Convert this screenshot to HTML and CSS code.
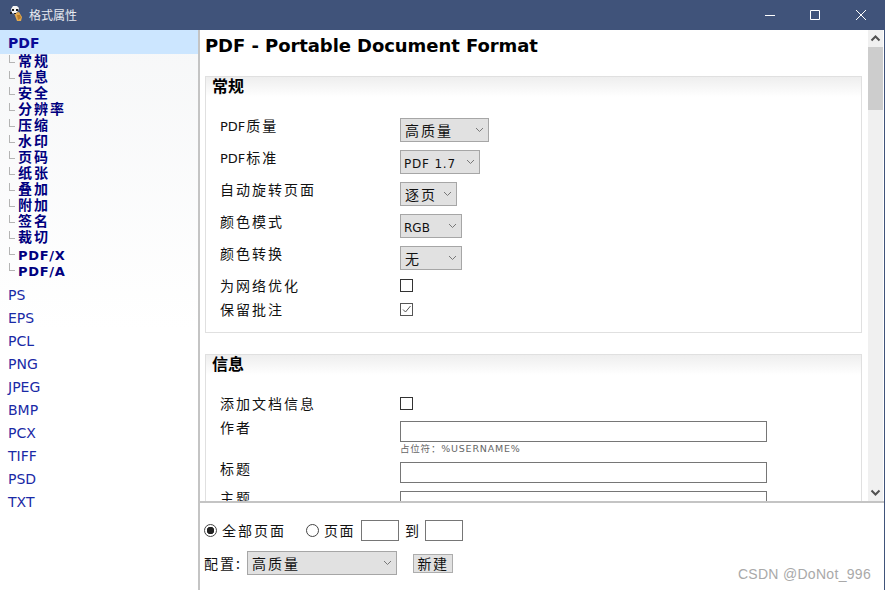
FILE: index.html
```html
<!DOCTYPE html>
<html lang="zh-CN">
<head>
  <meta charset="UTF-8">
  <title>格式属性</title>
  <link rel="stylesheet" href="styles.css">
</head>
<body>
  <div class="window">
    <header class="titlebar">
      <svg class="app-icon" width="14" height="16" viewBox="0 0 14 16">
        <path d="M5 7l5-1 3 5-1 4H8z" fill="#e0a850"/>
        <path d="M8 9l3 0 1 3-3 2z" fill="#b87a28"/>
        <path d="M2 3l2-3h4l2 2-1 3-3 3-3-1z" fill="#f2f2f2"/>
        <path d="M3 3h2v2H3zM7 3h2v2H7zM1 6h2v2H1zM5 7h2v1H5z" fill="#1c1c1c"/>
      </svg>
      <span class="title">格式属性</span>
      <div class="win-buttons">
        <svg width="10" height="10" viewBox="0 0 10 10"><path d="M0 5.500h10" stroke="#fff" fill="none"/></svg>
        <svg width="10" height="10" viewBox="0 0 10 10"><path d="M.5.5h9v9h-9z" stroke="#fff" fill="none"/></svg>
        <svg width="10" height="10" viewBox="0 0 10 10"><path d="M0 0l10 10M10 0L0 10" stroke="#fff" fill="none"/></svg>
      </div>
    </header>

    <div class="body">
      <aside class="sidebar">
        <a class="format active">PDF</a>
        <ul class="subnav">
          <li>常规</li>
          <li>信息</li>
          <li>安全</li>
          <li>分辨率</li>
          <li>压缩</li>
          <li>水印</li>
          <li>页码</li>
          <li>纸张</li>
          <li>叠加</li>
          <li>附加</li>
          <li>签名</li>
          <li>裁切</li>
          <li class="latin">PDF/X</li>
          <li class="latin">PDF/A</li>
        </ul>
        <a class="format">PS</a>
        <a class="format">EPS</a>
        <a class="format">PCL</a>
        <a class="format">PNG</a>
        <a class="format">JPEG</a>
        <a class="format">BMP</a>
        <a class="format">PCX</a>
        <a class="format">TIFF</a>
        <a class="format">PSD</a>
        <a class="format">TXT</a>
      </aside>

      <div class="right">
        <div class="pane">
          <main class="content">
            <h1>PDF - Portable Document Format</h1>

            <section class="group">
              <h2>常规</h2>
              <div class="row"><label><span class="lat">PDF</span>质量</label><select class="w89"><option>高质量</option></select></div>
              <div class="row"><label><span class="lat">PDF</span>标准</label><select class="w80 num"><option>PDF 1.7</option></select></div>
              <div class="row"><label>自动旋转页面</label><select class="w57"><option>逐页</option></select></div>
              <div class="row"><label>颜色模式</label><select class="w62 num"><option>RGB</option></select></div>
              <div class="row"><label>颜色转换</label><select class="w62"><option>无</option></select></div>
              <div class="row check"><label>为网络优化</label><input type="checkbox"></div>
              <div class="row check"><label>保留批注</label><input type="checkbox" checked></div>
            </section>

            <section class="group">
              <h2>信息</h2>
              <div class="row check first"><label>添加文档信息</label><input type="checkbox"></div>
              <div class="row text">
                <label>作者</label>
                <div>
                  <input type="text">
                  <p class="hint">占位符：%USERNAME%</p>
                </div>
              </div>
              <div class="row text"><label>标题</label><input type="text"></div>
              <div class="row text"><label>主题</label><input type="text"></div>
            </section>
          </main>
          <div class="scrollbar">
            <svg class="arrow" width="15" height="17" viewBox="0 0 15 17"><path d="M3.500 10.500l4-4 4 4" stroke="#505050" stroke-width="2" fill="none"/></svg>
            <div class="track"><div class="thumb"></div></div>
            <svg class="arrow" width="15" height="17" viewBox="0 0 15 17"><path d="M3.500 6.500l4 4 4-4" stroke="#505050" stroke-width="2" fill="none"/></svg>
          </div>
        </div>

        <footer class="footer">
          <div class="pages">
            <label class="radio"><input type="radio" name="range" checked>全部页面</label>
            <label class="radio second"><input type="radio" name="range">页面</label>
            <input type="text" class="page-no">
            <span class="to">到</span>
            <input type="text" class="page-no">
          </div>
          <div class="profile">
            <span>配置:</span>
            <select class="w150"><option>高质量</option></select>
            <button>新建</button>
          </div>
          <div class="watermark">CSDN @DoNot_996</div>
        </footer>
      </div>
    </div>
  </div>
</body>
</html>
```

FILE: styles.css
```css
* {
  box-sizing: border-box;
}

html, body {
  margin: 0;
  padding: 0;
  height: 590px;
  overflow: hidden;
}

body {
  font-family: "Noto Sans CJK SC", "DejaVu Sans", sans-serif;
  font-size: 14px;
  color: #111;
  background: #fff;
}

.window {
  display: flex;
  flex-direction: column;
  height: 590px;
  border-right: 1px solid #40537a;
}

.titlebar {
  display: flex;
  align-items: center;
  height: 30px;
  flex: none;
  padding-left: 9px;
  padding-bottom: 1px;
  background: #40537a;
  color: #e8ebf1;
  font-size: 12px;
}

.title {
  margin-left: 6px;
}

.app-icon {
  margin-top: -1px;
}

.win-buttons {
  display: flex;
  gap: 35px;
  margin-left: auto;
  padding-right: 18px;
}

.win-buttons svg:last-child {
  margin-left: 1px;
}

.body {
  display: flex;
  flex: 1;
  min-height: 0;
}

.sidebar {
  width: 200px;
  flex: none;
  border-right: 2px solid #c4c4c4;
  background: linear-gradient(#f6f7f8, #fff 300px);
}

.format {
  display: block;
  height: 23px;
  line-height: 23px;
  padding-left: 8px;
  color: #1a2aa6;
  font-family: "DejaVu Sans", sans-serif;
  font-size: 14px;
}

.format.active {
  height: 24px;
  line-height: 27px;
  background: #cce6ff;
  color: #0a0a96;
  font-weight: bold;
}

.subnav {
  list-style: none;
  margin: 0 0 6px;
  padding: 0;
}

.subnav li {
  height: 16px;
  line-height: 12px;
  padding-left: 18px;
  position: relative;
  color: #00007f;
  font-weight: bold;
  font-size: 14px;
  letter-spacing: 2px;
}

.subnav li::before {
  content: "";
  position: absolute;
  left: 9px;
  top: 1px;
  width: 5px;
  height: 7px;
  border-left: 1px solid #b4b4b4;
  border-bottom: 1px solid #b4b4b4;
}

.subnav .latin {
  line-height: 19px;
  font-family: "DejaVu Sans", sans-serif;
  font-size: 13px;
  letter-spacing: 0.7px;
}

.right {
  display: flex;
  flex-direction: column;
  flex: 1;
  min-width: 0;
}

.pane {
  display: flex;
  height: 473px;
  flex: none;
  padding-right: 1px;
  border-bottom: 2px solid #c4c4c4;
}

.content {
  flex: 1;
  overflow: hidden;
  padding: 0 5px;
  min-width: 0;
}

h1 {
  margin: 4px 0 19px;
  height: 23px;
  line-height: 23px;
  font-family: "DejaVu Sans", sans-serif;
  font-size: 18px;
  letter-spacing: -0.07px;
  font-weight: bold;
  color: #000;
}

.group {
  width: 657px;
  margin-bottom: 21px;
  padding: 0 14px 6px;
  border: 1px solid #e0e0e0;
}

h2 {
  margin: 0 -14px 21px;
  padding-left: 6px;
  height: 20px;
  line-height: 16px;
  font-size: 16px;
  font-weight: bold;
  color: #000;
  background: linear-gradient(#eeeeee, #fff);
}

.row {
  display: flex;
  height: 32px;
  font-size: 14px;
  letter-spacing: 2px;
}

.row label {
  width: 180px;
  flex: none;
  line-height: 14px;
}

.lat {
  font-family: "DejaVu Sans", sans-serif;
  font-size: 13px;
  letter-spacing: 0;
  margin-right: 1px;
}

.row.check {
  height: 24px;
}

.row.check.first {
  height: 25px;
}

.row.text label {
  line-height: 12px;
}

.row.text {
  height: auto;
  min-height: 29px;
}

input[type="checkbox"] {
  appearance: none;
  width: 13px;
  height: 13px;
  margin: 1px 0 0;
  border: 1px solid #333;
  background: #fff;
}

input[type="checkbox"]:checked {
  border-color: #555;
  background: #fff url("data:image/svg+xml,%3Csvg xmlns='http://www.w3.org/2000/svg' width='11' height='11'%3E%3Cpath d='M2 5.500l2.500 2.500 5-6' stroke='%23555' fill='none'/%3E%3C/svg%3E") no-repeat center;
}

.row input[type="text"] {
  display: block;
  width: 367px;
  height: 21px;
  margin: 0;
  border: 1px solid #767676;
  background: #fff;
}

.hint {
  margin: 1px 0 7px;
  height: 12px;
  line-height: 12px;
  font-family: "DejaVu Sans", "Noto Sans CJK SC", sans-serif;
  font-size: 9.500px;
  letter-spacing: 0.8px;
  color: #666;
}

select {
  height: 24px;
  margin: 0;
  padding: 0 0 0 4px;
  appearance: none;
  border: 1px solid #a6a6a6;
  border-radius: 0;
  background: #e1e1e1 url("data:image/svg+xml,%3Csvg xmlns='http://www.w3.org/2000/svg' width='7' height='4'%3E%3Cpath d='M0 0l3.500 3.500 3.500-3.500' stroke='%23777' fill='none'/%3E%3C/svg%3E") no-repeat right 5px center;
  font-family: "Noto Sans CJK SC", "DejaVu Sans", sans-serif;
  font-size: 14px;
  letter-spacing: 2px;
  color: #111;
}

select.num {
  padding: 3px 0 0 3px;
  font-family: "DejaVu Sans", sans-serif;
  font-size: 12px;
  letter-spacing: 0;
}

select.w80 {
  letter-spacing: 0.8px;
}

.w89 { width: 89px; }
.w80 { width: 80px; }
.w57 { width: 57px; }
.w62 { width: 62px; }
.w150 { width: 150px; }

.scrollbar {
  display: flex;
  flex-direction: column;
  width: 15px;
  flex: none;
  background: #f0f0f0;
}

.arrow {
  flex: none;
}

.track {
  flex: 1;
}

.thumb {
  height: 63px;
  background: #cdcdcd;
}

.footer {
  position: relative;
  flex: 1;
  padding: 15px 4px 0;
  font-size: 14px;
  letter-spacing: 2px;
}

.pages {
  display: flex;
  align-items: center;
  gap: 6px;
  height: 24px;
}

.radio {
  display: flex;
  align-items: center;
}

.radio.second {
  margin-left: 14px;
  letter-spacing: 1.5px;
}

.radio input {
  appearance: none;
  width: 13px;
  height: 13px;
  margin: 0 5px 0 0;
  border: 1px solid #444;
  border-radius: 50%;
  background: #fff;
}

.radio input:checked {
  background: radial-gradient(circle, #222 3.500px, #fff 4px);
}

.page-no {
  width: 38px;
  height: 21px;
  margin: 0;
  border: 1px solid #767676;
}

.to {
  letter-spacing: 0;
}

.profile {
  display: flex;
  align-items: center;
  height: 24px;
  margin-top: 9px;
}

.profile select {
  margin-left: 5px;
}

button {
  width: 40px;
  height: 19px;
  margin-left: 16px;
  padding: 0;
  border: 1px solid #adadad;
  border-radius: 0;
  background: #e1e1e1;
  font-family: "Noto Sans CJK SC", sans-serif;
  font-size: 14px;
  line-height: 16px;
  letter-spacing: 1.5px;
  color: #111;
}

.watermark {
  position: absolute;
  right: 13px;
  bottom: 8px;
  font-family: "Liberation Sans", sans-serif;
  font-size: 14px;
  letter-spacing: 0.3px;
  color: #a9a9a9;
}
```
